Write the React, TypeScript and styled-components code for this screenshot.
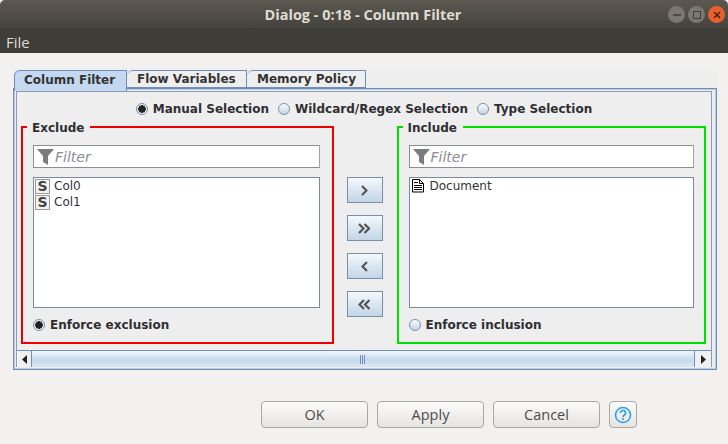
import React from "react";
import styled, { createGlobalStyle } from "styled-components";

const Global = createGlobalStyle`
  html, body { margin: 0; padding: 0; width: 728px; height: 444px; overflow: hidden; background: #f2f1f0; }
  * { box-sizing: border-box; }
`;

const Win = styled.div`
  width: 728px; height: 444px; display: flex; flex-direction: column; background: #f2f1f0;
  font-family: "DejaVu Sans", sans-serif;
`;
const TitleBar = styled.div`
  height: 28px; display: flex; align-items: center; justify-content: center; position: relative; padding-right: 2px;
  background: linear-gradient(#5c5850, #45433e);
  border-radius: 5px 5px 0 0;
  color: #dfdbd2; font: bold 14.5px "Open Sans", sans-serif;
`;
const WinBtns = styled.div`
  position: absolute; right: 3px; top: 6px; display: flex; gap: 3px;
`;
const WinBtn = styled.div<{ $bg: string }>`
  width: 17px; height: 17px; border-radius: 50%; background: ${p => p.$bg};
  display: flex; align-items: center; justify-content: center;
`;
const MenuBar = styled.div`
  height: 25px; background: #3f3d38; color: #dfdbd2; padding: 4px 6px 0;
  font: 15px "Open Sans", sans-serif;
`;
const Tabs = styled.div`
  margin: 15px 11px 0 13px; height: 302px; background: #eeeeee; display: flex; flex-direction: column;
`;
const TabStrip = styled.div`
  height: 21px; display: flex; padding: 2px 0 0 1px; flex: none; align-items: flex-start;
`;
const Tab = styled.div<{ $on?: boolean; $w: number }>`
  width: ${p => p.$w}px; height: ${p => p.$on ? 21 : 18}px; padding: ${p => p.$on ? "0 0 3px 9px" : "0 0 0 10px"}; display: flex; align-items: center; flex: none;
  font: bold 12px "DejaVu Sans", sans-serif; color: #333;
  background: ${p => p.$on ? "#c4d9ef" : "#eeeeee"};
  border: 1px solid #6f8fb8; border-bottom: ${p => p.$on ? "none" : "1px solid #6f8fb8"}; border-left-width: ${p => p.$on ? 1 : 0}px;
  border-top-left-radius: 6px; position: relative; z-index: ${p => p.$on ? 1 : 0};
`;
const Panel = styled.div`
  flex: 1; border: 1px solid #6f8fb8; padding: 2px 4px 2px 2px; margin-top: -1px; display: flex;
  background: #eeeeee; box-shadow: inset 0 0 0 1px #b9cbe2;
`;
const Scroll = styled.div`
  flex: 1; border: 1px solid #8a9cb5; border-bottom: none; display: flex; flex-direction: column; min-width: 0;
`;
const Body = styled.div`
  flex: 1; display: flex; flex-direction: column; padding: 6px 5px 0 4px; min-height: 0;
`;
const ModeRow = styled.div`
  display: flex; justify-content: center; gap: 9px; height: 20px; align-items: center; padding: 1px 0 0 1px;
`;
const RadioLabel = styled.label`
  display: flex; align-items: center; gap: 5px; font: bold 12px "DejaVu Sans", sans-serif; color: #2f2f33;
`;
const RadioDot = styled.span<{ $on?: boolean }>`
  width: 12px; height: 12px; border-radius: 50%; border: 1px solid #7d8fa8; flex: none;
  background: ${p => p.$on
    ? "radial-gradient(circle, #222 0 3.5px, #e8eef5 4px)"
    : "linear-gradient(#fafcfe, #c6d4e6)"};
`;
const Columns = styled.div`
  display: flex; margin-top: 2px; align-items: flex-start;
`;
const Group = styled.fieldset<{ $c: string; $w: number; $pr: number }>`
  margin: 0; width: ${p => p.$w}px; height: 224px; border: 2px solid ${p => p.$c}; padding: 11px ${p => p.$pr}px 0 10px;
  display: flex; flex-direction: column; min-width: 0;
`;
const Legend = styled.legend`
  font: bold 12px "DejaVu Sans", sans-serif; color: #2f2f33; padding: 1px 6px 0 5px; margin-left: -6px; height: 14px; line-height: 14px;
`;
const FilterBox = styled.div`
  height: 23px; background: #fff; border: 1px solid #8a8f96; display: flex; align-items: center; padding-left: 3px; gap: 1px; flex: none;
  border-right-color: #a0a4a8;
  font: italic 14px "DejaVu Sans", sans-serif; color: #8c8c96;
`;
const ListBox = styled.div`
  margin-top: 9px; height: 131px; background: #fff; border: 1px solid #7c8a9c; padding: 0 1px; flex: none;
`;
const ListRow = styled.div`
  height: 16px; display: flex; align-items: center; gap: 5px; font: 12px "DejaVu Sans", sans-serif; color: #333;
`;
const TypeBadge = styled.span`
  width: 15px; height: 15px; border: 1px solid #999; background: #f2f2f2; display: flex; align-items: center; justify-content: center; margin-right: -1px;
  font: bold 14px "DejaVu Sans", sans-serif; color: #444; flex: none;
`;
const EnforceRow = styled.div`
  margin-top: 10px; height: 14px; display: flex;
`;
const Middle = styled.div`
  width: 63px; display: flex; flex-direction: column; gap: 12px; padding: 57px 1px 0 0; align-items: center; flex: none;
`;
const ArrowBtn = styled.div`
  width: 36px; height: 26px; border: 1px solid #7c8ea6; background: linear-gradient(#f4f8fc, #c2d5e8); display: flex; align-items: center; justify-content: center;
`;
const HScroll = styled.div`
  height: 17px; display: flex; flex: none; margin-top: 5px; border-top: 1px solid #6f8fcb;
`;
const ScrollEnd = styled.div`
  width: 15px; display: flex; align-items: center; justify-content: center; background: #f0f0f0;
  border-right: 1px solid #6f8fcb; border-left: 1px solid #fff;
`;
const ScrollEndR = styled(ScrollEnd)`
  border-right: none; border-left: 1px solid #6f8fcb; width: 17px;
`;
const Thumb = styled.div`
  flex: 1; display: flex; align-items: center; justify-content: center; gap: 1px; padding-right: 2px;
  background: linear-gradient(#f3f7fb 0, #c6d9ee 55%, #dbe7f4 100%);
`;
const Grip = styled.span`
  width: 1px; height: 9px; background: #6f8fcb;
`;
const Footer = styled.div`
  margin-top: 31px; display: flex; padding-left: 261px; gap: 9px; align-items: flex-start;
`;
const FootBtn = styled.div<{ $w: number }>`
  width: ${p => p.$w}px; height: 27px; border: 1px solid #aaa8a4; border-radius: 4px; background: linear-gradient(#fbfbfa, #e6e4e1);
  display: flex; align-items: center; justify-content: center; font: 14.5px "Open Sans", sans-serif; color: #4c4c4c;
`;

const Funnel = () => (
  <svg width="17" height="17" viewBox="0 0 17 17" style={{ flex: "none" }}>
    <path d="M0 1h17l-6 7v9l-5-3V8z" fill="#7c7c7c" />
  </svg>
);
const Chevron = ({ left, double }: { left?: boolean; double?: boolean }) => {
  const one = (x: number) => left
    ? `M${x + 6} 2L${x + 1.5} 6.5L${x + 6} 11`
    : `M${x + 1} 2L${x + 5.5} 6.5L${x + 1} 11`;
  return (
    <svg width={double ? 13 : 7} height="13" viewBox={`0 0 ${double ? 13 : 7} 13`}>
      <path d={double ? one(0) + one(5.5) : one(0)} fill="none" stroke="#555" strokeWidth="2.2" />
    </svg>
  );
};
const Doc = () => (
  <svg width="14" height="14" viewBox="0 0 14 14" style={{ flex: "none" }}>
    <path d="M1.5 .5h7l4 4v8.5h-11z" fill="#fff" stroke="#000" />
    <path d="M8.5 .5v4h4M3 3.5h4M3 6.5h8M3 8.5h8M3 10.5h8" fill="none" stroke="#000" />
  </svg>
);
const Tri = ({ left }: { left?: boolean }) => (
  <svg width="6" height="9" viewBox="0 0 6 9"><path d={left ? "M5 0v9L0 4.5z" : "M1 0v9l5-4.5z"} fill="#222" /></svg>
);

const ColumnBox = ({ title, color, w, pr, enforce, on, children }: { title: string; color: string; w: number; pr: number; enforce: string; on?: boolean; children?: React.ReactNode }) => (
  <Group $c={color} $w={w} $pr={pr}>
    <Legend>{title}</Legend>
    <FilterBox><Funnel />Filter</FilterBox>
    <ListBox>{children}</ListBox>
    <EnforceRow><RadioLabel><RadioDot $on={on} />{enforce}</RadioLabel></EnforceRow>
  </Group>
);

export default function App() {
  return (
    <Win>
      <Global />
      <TitleBar>
        Dialog - 0:18 - Column Filter
        <WinBtns>
          <WinBtn $bg="#7b7871"><svg width="10" height="10"><path d="M1 5h8" stroke="#3f3d38" strokeWidth="1.5" /></svg></WinBtn>
          <WinBtn $bg="#7b7871"><svg width="10" height="10"><rect x="1.5" y="1.5" width="7" height="7" fill="none" stroke="#3f3d38" /></svg></WinBtn>
          <WinBtn $bg="#e95f2f"><svg width="10" height="10"><path d="M2 2l6 6M8 2l-6 6" stroke="#4a2010" strokeWidth="1.5" /></svg></WinBtn>
        </WinBtns>
      </TitleBar>
      <MenuBar>File</MenuBar>
      <Tabs>
        <TabStrip>
          <Tab $on $w={113}>Column Filter</Tab>
          <Tab $w={120}>Flow Variables</Tab>
          <Tab $w={119}>Memory Policy</Tab>
        </TabStrip>
        <Panel>
          <Scroll>
            <Body>
              <ModeRow>
                <RadioLabel><RadioDot $on />Manual Selection</RadioLabel>
                <RadioLabel><RadioDot />Wildcard/Regex Selection</RadioLabel>
                <RadioLabel><RadioDot />Type Selection</RadioLabel>
              </ModeRow>
              <Columns>
                <ColumnBox title="Exclude" color="#f00000" w={313} pr={12} enforce="Enforce exclusion" on>
                  <ListRow><TypeBadge>S</TypeBadge>Col0</ListRow>
                  <ListRow><TypeBadge>S</TypeBadge>Col1</ListRow>
                </ColumnBox>
                <Middle>
                  <ArrowBtn><Chevron /></ArrowBtn>
                  <ArrowBtn><Chevron double /></ArrowBtn>
                  <ArrowBtn><Chevron left /></ArrowBtn>
                  <ArrowBtn><Chevron left double /></ArrowBtn>
                </Middle>
                <ColumnBox title="Include" color="#00e000" w={310} pr={10} enforce="Enforce inclusion">
                  <ListRow><Doc />Document</ListRow>
                </ColumnBox>
              </Columns>
            </Body>
            <HScroll>
              <ScrollEnd><Tri left /></ScrollEnd>
              <Thumb><Grip /><Grip /><Grip /></Thumb>
              <ScrollEndR><Tri /></ScrollEndR>
            </HScroll>
          </Scroll>
        </Panel>
      </Tabs>
      <Footer>
        <FootBtn $w={107}>OK</FootBtn>
        <FootBtn $w={107}>Apply</FootBtn>
        <FootBtn $w={107}>Cancel</FootBtn>
        <FootBtn $w={28}>
          <svg width="18" height="18" viewBox="0 0 18 18">
            <circle cx="9" cy="9" r="7.5" fill="none" stroke="#2aa1f0" strokeWidth="1.6" />
            <path d="M6.5 7a2.5 2.5 0 1 1 3.6 2.2c-.8.4-1.1.9-1.1 1.8" fill="none" stroke="#2aa1f0" strokeWidth="1.7" />
            <rect x="8.1" y="12" width="1.8" height="1.8" fill="#2aa1f0" />
          </svg>
        </FootBtn>
      </Footer>
    </Win>
  );
}
